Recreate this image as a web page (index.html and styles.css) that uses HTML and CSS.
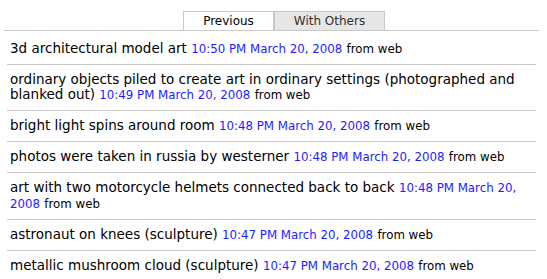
FILE: index.html
```html
<!DOCTYPE html>
<html lang="en">
  <head>
    <meta charset="UTF-8" />
    <title>Previous</title>
    <link rel="stylesheet" href="styles.css">
  </head>
  <body>
    <div class="page">
      <div class="tabs">
        <span class="tab active">Previous</span>
        <span class="tab">With Others</span>
      </div>
      <ul class="updates">
        <li>3d architectural model art <span class="date">10:50 PM March 20, 2008</span> <span class="via">from web</span></li>
        <li>ordinary objects piled to create art in ordinary settings (photographed and blanked out) <span class="date">10:49 PM March 20, 2008</span> <span class="via">from web</span></li>
        <li>bright light spins around room <span class="date">10:48 PM March 20, 2008</span> <span class="via">from web</span></li>
        <li>photos were taken in russia by westerner <span class="date">10:48 PM March 20, 2008</span> <span class="via">from web</span></li>
        <li>art with two motorcycle helmets connected back to back <span class="date">10:48 PM March 20, 2008</span> <span class="via">from web</span></li>
        <li>astronaut on knees (sculpture) <span class="date">10:47 PM March 20, 2008</span> <span class="via">from web</span></li>
        <li>metallic mushroom cloud (sculpture) <span class="date">10:47 PM March 20, 2008</span> <span class="via">from web</span></li>
      </ul>
    </div>
  </body>
</html>
```

FILE: styles.css
```css
* {
  font-family: "DejaVu Sans", Verdana, sans-serif;
}

body {
  margin: 0;
  background: white;
  color: black;
}

.page {
  width: 535px;
  margin-left: 4px;
  padding-top: 11px;
}

.tabs {
  display: flex;
  justify-content: center;
  border-bottom: 1px solid #c8c8c8;
  padding-left: 25px;
}

.tab {
  font-size: 12px;
  line-height: 18px;
  border: 1px solid #c8c8c8;
  border-bottom: none;
  text-align: center;
  color: #333;
  background: #e6e6e6;
  width: 109px;
}

.tab.active {
  background: white;
  color: black;
  width: 89px;
}

.updates {
  list-style: none;
  margin: 3px 3px 0 3px;
  padding: 0;
}

.updates li {
  font-size: 13.5px;
  line-height: 15px;
  padding: 7px 3px;
  border-bottom: 1px solid #c8c8c8;
}

.date {
  font-size: 11.8px;
  color: #1c1cff;
}

.via {
  font-size: 11.8px;
}
```
